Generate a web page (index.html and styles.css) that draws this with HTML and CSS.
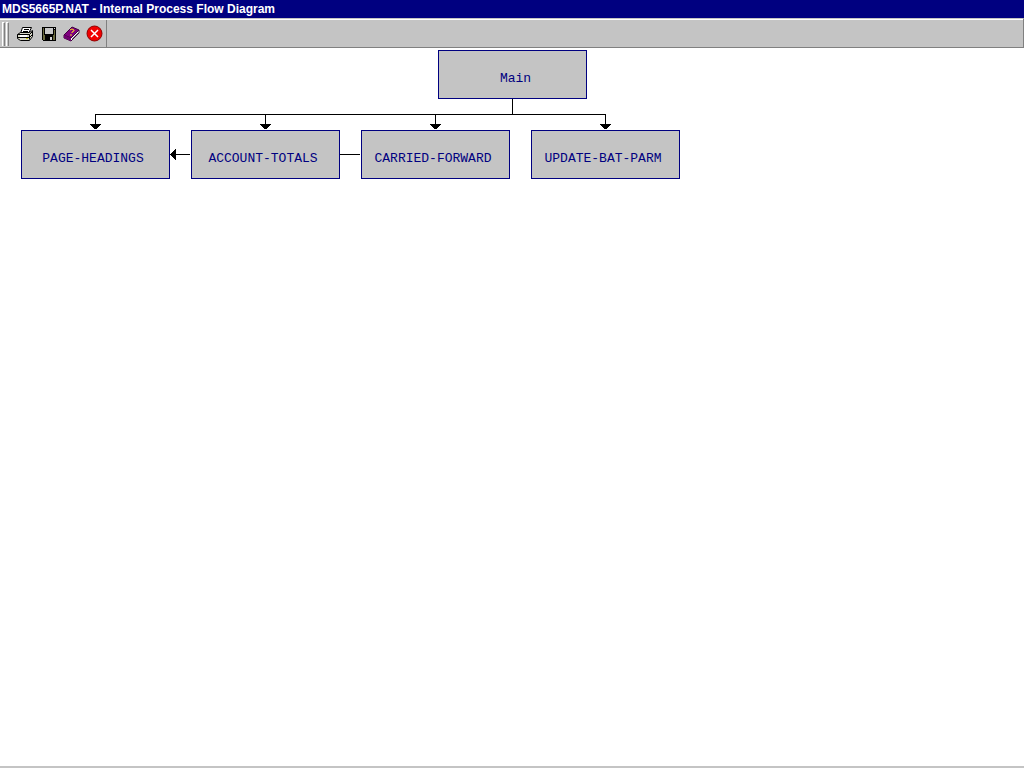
FILE: index.html
```html
<!DOCTYPE html>
<html lang="en">
<head>
<meta charset="utf-8">
<title>MDS5665P.NAT - Internal Process Flow Diagram</title>
<link rel="stylesheet" href="styles.css">
</head>
<body>
<header class="titlebar"><h1 class="title">MDS5665P.NAT - Internal Process Flow Diagram</h1></header>
<div class="toolbar">
  <div class="band" role="toolbar" aria-label="Diagram">
    <span class="grip"></span>
    <span class="grip"></span>
    <button class="tool" type="button" aria-label="Print">
      <svg width="17" height="16" viewBox="0 0 17 16">
        <path d="M5.500 1.500h9l-3 6h-8z" fill="#fff" stroke="#000"/>
        <path d="M7 3.500h5M6 5.500h5" stroke="#000"/>
        <path d="M.5 8.500l3-2h9l3-2v6l-3 4h-9l-3-2z" fill="#d8d8c8" stroke="#000"/>
        <path d="M.5 8.500h12l3-3M.5 11.500h12l3-3M12.500 8.500v5" fill="none" stroke="#000"/>
        <path d="M3 9h7v2H3z" fill="#fff"/>
        <path d="M9 12h2v1H9z" fill="#c8c800"/>
      </svg>
    </button>
    <button class="tool" type="button" aria-label="Save">
      <svg width="16" height="16" viewBox="0 0 16 16" shape-rendering="crispEdges">
        <path d="M1 1h14v14H2l-1-1z" fill="#000"/>
        <path d="M2 2h1v7h1v1h8V9h1V4h1v10h-2v-4H4v4H2z" fill="#68683c"/>
        <path d="M4 2h8v6H4z" fill="#c8c8c8"/>
        <path d="M13 2h1v1h-1zM9 11h2v3H9z" fill="#d8d8d8"/>
      </svg>
    </button>
    <button class="tool" type="button" aria-label="Help">
      <svg width="17" height="16" viewBox="0 0 17 16">
        <path d="M1 9l7 3 8-8v3l-8 8-7-3z" fill="#fff" stroke="#400040"/>
        <path d="M1 9L9 1l7 3-8 8z" fill="#800080" stroke="#400040"/>
        <path d="M1 9v3l7 3v-3z" fill="#700070"/>
        <path d="M9 13l7-7" stroke="#808080"/>
        <path d="M7 4l2-1 2 1v1L9 6v1M8 8v2" fill="none" stroke="#f8d820"/>
      </svg>
    </button>
    <button class="tool" type="button" aria-label="Close">
      <svg width="17" height="17" viewBox="0 0 17 17">
        <circle cx="8.500" cy="8.500" r="7.500" fill="#f00000" stroke="#900000"/>
        <path d="M5 5l7 7M12 5l-7 7" stroke="#fff" stroke-width="1.500"/>
      </svg>
    </button>
  </div>
</div>
<main class="canvas">
  <svg class="links" width="700" height="140" viewBox="0 0 700 140" shape-rendering="crispEdges" aria-hidden="true">
    <defs>
      <path id="arrow" d="M0 0h11v1h-1v1h-1v1h-1v1h-1v1H4V4H3V3H2V2H1V1H0z"/>
    </defs>
    <path d="M512 51h1v15h93v11h-1V67H436v10h-1V67H266v10h-1V67H96v10h-1V66h417z"/>
    <use href="#arrow" x="90" y="76"/>
    <use href="#arrow" x="260" y="76"/>
    <use href="#arrow" x="430" y="76"/>
    <use href="#arrow" x="600" y="76"/>
    <path d="M170 106h1v-1h1v-1h1v-1h1v-1h1v-1h1v5h14v1h-14v5h-1v-1h-1v-1h-1v-1h-1v-1h-1v-1h-1zM340 106h20v1h-20z"/>
  </svg>
  <div class="node main">Main</div>
  <div class="node headings">PAGE-HEADINGS</div>
  <div class="node totals">ACCOUNT-TOTALS</div>
  <div class="node forward">CARRIED-FORWARD</div>
  <div class="node update">UPDATE-BAT-PARM</div>
</main>
</body>
</html>
```
FILE: styles.css
```css
* { box-sizing: border-box; }
body {
  margin: 0;
  min-height: 100vh;
  display: flex;
  flex-direction: column;
  background: #fff;
  font-family: "Liberation Sans", Arial, sans-serif;
}
.titlebar {
  height: 18px;
  padding-left: 2px;
  background: #000080;
  color: #fff;
}
.title {
  margin: 0;
  font-size: 12px;
  line-height: 18px;
  font-weight: bold;
  white-space: nowrap;
}
.toolbar {
  display: flex;
  height: 30px;
  padding-top: 1px;
  background: #c4c4c4;
  border-top: 1px solid #c4c4c4;
  border-right: 1px solid #808080;
  border-bottom: 1px solid #808080;
  box-shadow: inset 0 1px #fff;
}
.band {
  display: flex;
  align-items: center;
  padding-left: 2px;
  border-right: 1px solid #808080;
}
.grip {
  width: 3px;
  height: 24px;
  margin-right: 1px;
  border-left: 1px solid #fff;
  border-top: 1px solid #fff;
  border-right: 1px solid #808080;
}
.tool {
  display: grid;
  place-items: center;
  width: 23px;
  height: 22px;
  margin: 0;
  padding: 0;
  border: 0;
  background: transparent;
}
.grip + .tool { margin-left: 4px; }
.canvas {
  position: relative;
  flex: 1;
  border-bottom: 2px solid #c4c4c4;
}
.links {
  position: absolute;
  left: 0;
  top: 0;
}
.node {
  position: absolute;
  top: 82px;
  display: flex;
  align-items: center;
  justify-content: center;
  width: 149px;
  height: 49px;
  padding: 8px 5px 0 0;
  border: 1px solid #000080;
  background: #c4c4c4;
  color: #000080;
  font: 13px "Liberation Mono", "Courier New", monospace;
}
.main {
  left: 438px;
  top: 2px;
  padding: 8px 0 0 6px;
}
.headings { left: 21px; }
.totals { left: 191px; }
.forward { left: 361px; }
.update { left: 531px; }
```
